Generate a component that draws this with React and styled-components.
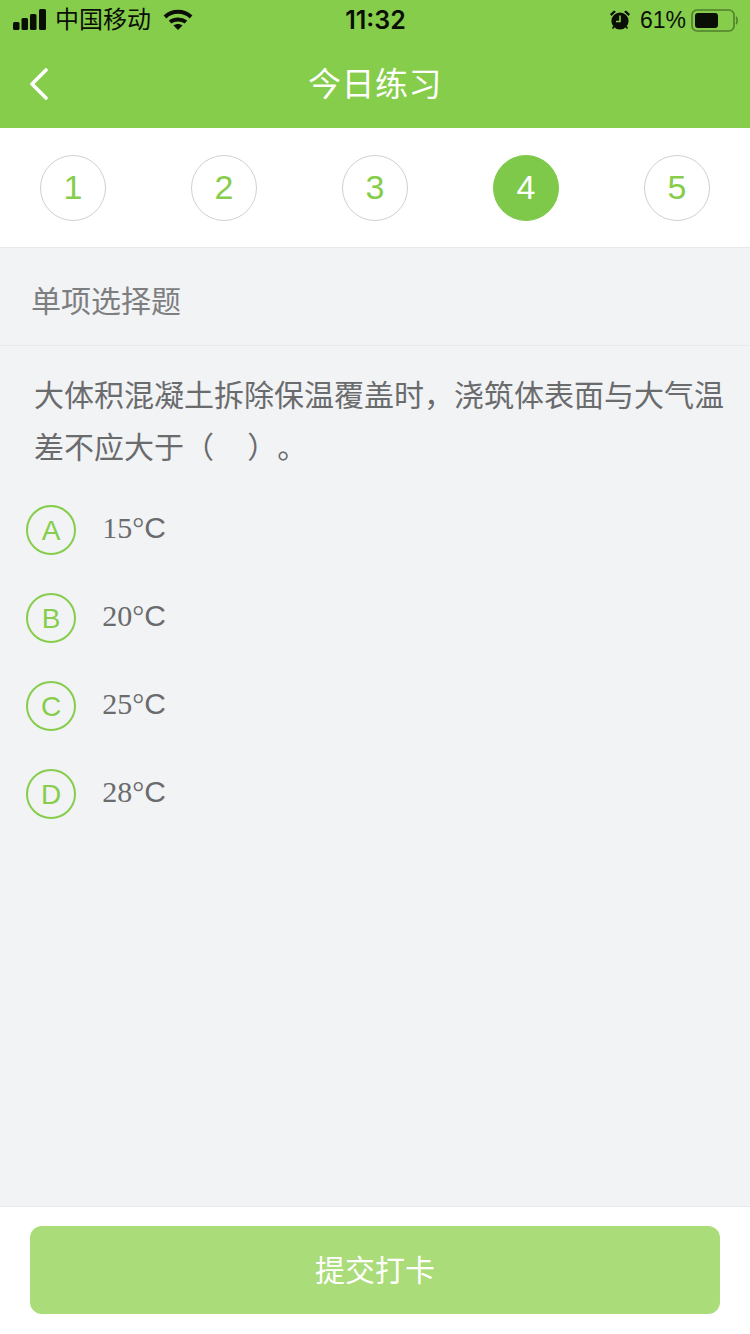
import React from "react";
import styled, { createGlobalStyle } from "styled-components";

const GlobalStyle = createGlobalStyle`
html, body {
  margin: 0;
  padding: 0;
  background: #f2f3f5;
  font-family: "Liberation Sans", "Noto Sans CJK SC", sans-serif;
}
`;

const Page = styled.div`
display: flex;
flex-direction: column;
width: 750px;
height: 1334px;
overflow: hidden;
background: #f2f3f5;
`;

const Header = styled.div`
display: flex;
flex-direction: column;
height: 128px;
background: #86cd4b;
flex-shrink: 0;
`;

const StatusBar = styled.div`
display: grid;
grid-template-columns: 1fr auto 1fr;
align-items: center;
height: 40px;
padding: 0 12px 0 13px;
color: #0a0f06;
`;

const StatusLeft = styled.div`
display: flex;
align-items: center;
font-size: 24px;
`;

const Carrier = styled.span`
margin: 0 12px 0 8px;
line-height: 1;
`;

const StatusRight = styled.div`
display: flex;
align-items: center;
justify-content: flex-end;
`;

const Clock = styled.div`
font-family: Inter, "Liberation Sans", sans-serif;
font-size: 25px;
font-weight: 600;
`;

const Percent = styled.span`
margin: 0 5px 0 9px;
font-size: 23px;
`;

const NavBar = styled.div`
position: relative;
display: flex;
align-items: center;
justify-content: center;
height: 88px;
padding-bottom: 4px;
box-sizing: border-box;
`;

const BackButton = styled.div`
position: absolute;
left: 29px;
top: 28px;
line-height: 0;
`;

const Title = styled.div`
color: #fff;
font-size: 33px;
letter-spacing: 0.5px;
`;

const StepBar = styled.div`
display: flex;
align-items: center;
justify-content: space-between;
height: 119px;
padding: 0 40px;
background: #fff;
border-bottom: 1px solid #e8e9ea;
flex-shrink: 0;
`;

const Step = styled.div`
display: flex;
align-items: center;
justify-content: center;
width: 66px;
height: 66px;
box-sizing: border-box;
border-radius: 50%;
border: 1px solid ${props => props.active ? "#7ec94a" : "#cfd1d0"};
background: ${props => props.active ? "#7ec94a" : "#fff"};
color: ${props => props.active ? "#fff" : "#86cd4b"};
font-size: 34px;
`;

const SectionTitle = styled.div`
display: flex;
align-items: center;
height: 98px;
padding: 5px 31px 0;
box-sizing: border-box;
border-bottom: 1px solid #e9eaec;
color: #7d7e80;
font-size: 30px;
flex-shrink: 0;
`;

const Question = styled.div`
padding: 24px 20px 0 34px;
color: #6a6b6d;
font-size: 30px;
line-height: 52px;
text-spacing-trim: space-all;
`;

const Options = styled.div`
display: flex;
flex-direction: column;
gap: 38px;
padding: 31px 0 0 26px;
`;

const Option = styled.div`
display: flex;
align-items: center;
height: 50px;
`;

const OptionLetter = styled.div`
display: flex;
align-items: center;
justify-content: center;
width: 50px;
height: 50px;
padding-top: 2px;
box-sizing: border-box;
border-radius: 50%;
border: 2px solid #86cd4b;
color: #86cd4b;
font-size: 28px;
flex-shrink: 0;
`;

const OptionText = styled.div`
width: 64px;
margin: -4px 0 0 26px;
text-align: right;
color: #6a6b6d;
font-family: "Liberation Serif", serif;
font-size: 30px;
`;

const Unit = styled.span`
font-family: "Liberation Sans", sans-serif;
`;

const Spacer = styled.div`
flex: 1;
`;

const Footer = styled.div`
display: flex;
height: 128px;
padding: 19px 30px;
box-sizing: border-box;
background: #fff;
border-top: 1px solid #e8e9ea;
flex-shrink: 0;
`;

const SubmitButton = styled.div`
display: flex;
align-items: center;
justify-content: center;
width: 690px;
height: 88px;
padding-bottom: 4px;
box-sizing: border-box;
border-radius: 12px;
background: #aadc79;
color: #fff;
font-size: 30px;
`;

const SignalIcon = () => (
	<svg width="34" height="22" viewBox="0 0 34 22">
		<rect x="0" y="13" width="6.5" height="8" rx="1.5" fill="#0a0f06" />
		<rect x="8.5" y="9" width="6.5" height="12" rx="1.5" fill="#0a0f06" />
		<rect x="17" y="5" width="6.5" height="16" rx="1.5" fill="#0a0f06" />
		<rect x="26" y="0" width="7" height="21" rx="1.5" fill="#0a0f06" />
	</svg>
);

const WifiIcon = () => (
	<svg width="30" height="22" viewBox="0 0 30 22" fill="none" stroke="#0a0f06" strokeWidth="4">
		<path d="M2 8 C9 1 21 1 28 8" />
		<path d="M7 13 C11.5 9.5 18.5 9.5 23 13" />
		<path d="M10.5 16.5 L15 21 L19.5 16.5 C17 14.5 13 14.5 10.5 16.5 Z" fill="#0a0f06" stroke="none" />
	</svg>
);

const AlarmIcon = () => (
	<svg width="22" height="22" viewBox="0 0 22 22">
		<circle cx="11" cy="12" r="8.6" fill="#0a0f06" />
		<path d="M1 5 L5 1.5 L7 2.8 L2.5 7 Z M21 5 L17 1.5 L15 2.8 L19.5 7 Z" fill="#0a0f06" />
		<path d="M3.5 19.5 L5 17.5 M18.5 19.5 L17 17.5" stroke="#0a0f06" strokeWidth="1.6" />
		<path d="M11 6.5 V12.5 H7" fill="none" stroke="#86cd4b" strokeWidth="1.6" />
	</svg>
);

const BatteryIcon = () => (
	<svg width="47" height="23" viewBox="0 0 47 23">
		<rect x="1" y="1" width="42" height="21" rx="5" fill="none" stroke="#4f7f2c" strokeWidth="1.6" />
		<rect x="4" y="4" width="23" height="15" rx="3" fill="#0a0f06" />
		<path d="M45 8 C46.5 9 46.5 14 45 15" fill="none" stroke="#4f7f2c" strokeWidth="1.6" />
	</svg>
);

const BackIcon = () => (
	<svg width="20" height="32" viewBox="0 0 20 32" fill="none" stroke="#fff" strokeWidth="3.6" strokeLinecap="round" strokeLinejoin="round">
		<path d="M17 2 L3 16 L17 30" />
	</svg>
);

const steps = [1, 2, 3, 4, 5];
const options = [
	{ letter: "A", value: "15°" },
	{ letter: "B", value: "20°" },
	{ letter: "C", value: "25°" },
	{ letter: "D", value: "28°" },
];

const App = () => {
	return <Page>
		<GlobalStyle />
		<Header>
			<StatusBar>
				<StatusLeft>
					<SignalIcon />
					<Carrier>中国移动</Carrier>
					<WifiIcon />
				</StatusLeft>
				<Clock>11:32</Clock>
				<StatusRight>
					<AlarmIcon />
					<Percent>61%</Percent>
					<BatteryIcon />
				</StatusRight>
			</StatusBar>
			<NavBar>
				<BackButton><BackIcon /></BackButton>
				<Title>今日练习</Title>
			</NavBar>
		</Header>
		<StepBar>
			{steps.map(n => <Step key={n} active={n === 4}>{n}</Step>)}
		</StepBar>
		<SectionTitle>单项选择题</SectionTitle>
		<Question>大体积混凝土拆除保温覆盖时，浇筑体表面与大气温差不应大于（&nbsp;&nbsp;&nbsp;&nbsp;）。</Question>
		<Options>
			{options.map(o => <Option key={o.letter}>
				<OptionLetter>{o.letter}</OptionLetter>
				<OptionText>{o.value}<Unit>C</Unit></OptionText>
			</Option>)}
		</Options>
		<Spacer />
		<Footer>
			<SubmitButton>提交打卡</SubmitButton>
		</Footer>
	</Page>
}

export default App;
